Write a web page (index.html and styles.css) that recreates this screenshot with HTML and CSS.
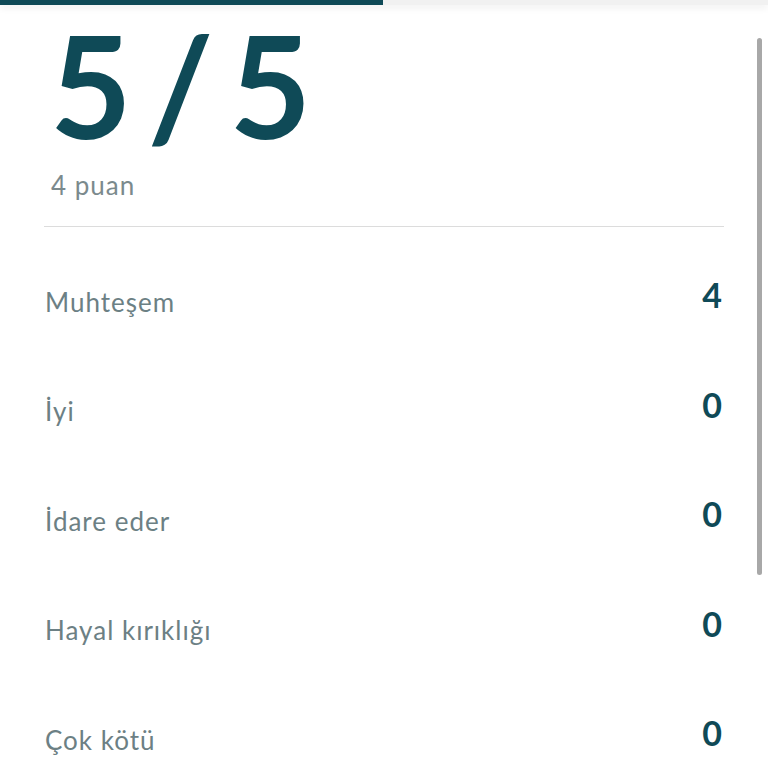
FILE: index.html
```
<!DOCTYPE html>
<html>
<head>
    <title>Değerlendirmeler</title>
    <link rel="stylesheet" href="styles.css">
</head>
<body>
    <div id="progress-bar"><div id="progress-fill"></div></div>
    <div id="panel">
        <div id="score-head">
            <div id="score">5/5</div>
            <div id="score-count">4 puan</div>
        </div>
        <div id="rating-list">
            <div class="rating-row">
                <span class="rating-label">Muhteşem</span>
                <span class="rating-value">4</span>
            </div>
            <div class="rating-row">
                <span class="rating-label">İyi</span>
                <span class="rating-value">0</span>
            </div>
            <div class="rating-row">
                <span class="rating-label">İdare eder</span>
                <span class="rating-value">0</span>
            </div>
            <div class="rating-row">
                <span class="rating-label">Hayal kırıklığı</span>
                <span class="rating-value">0</span>
            </div>
            <div class="rating-row">
                <span class="rating-label">Çok kötü</span>
                <span class="rating-value">0</span>
            </div>
        </div>
    </div>
    <div id="scroll-thumb"></div>
</body>
</html>
```

FILE: styles.css
```
body {
    font-family: Lato, "Open Sans", sans-serif;
    margin: 0;
    padding: 0;
    background-color: #ffffff;
    height: 100vh;
    overflow: hidden;
}
#progress-bar {
    position: fixed;
    top: 0;
    left: 0;
    right: 0;
    height: 5px;
    background-color: #f1f1f1;
    box-shadow: 0 3px 7px rgba(0,0,0,0.07);
    z-index: 1;
}
#progress-fill {
    width: 383px;
    height: 100%;
    background-color: #0f4a57;
}
#panel {
    padding: 0 44px;
}
#score-head {
    border-bottom: 1px solid #dcdcdc;
    padding-bottom: 25px;
}
#score {
    font-size: 141px;
    font-weight: 700;
    line-height: 1.2;
    letter-spacing: 16px;
    color: #0f4a57;
    padding-left: 6px;
}
#score-count {
    font-size: 26px;
    color: #7b8a8d;
    letter-spacing: 1px;
    padding-left: 7px;
}
#rating-list {
    padding-top: 20px;
}
.rating-row {
    height: 109.5px;
    display: flex;
    justify-content: space-between;
    align-items: center;
}
.rating-label {
    font-size: 26px;
    color: #6c8084;
    letter-spacing: 1px;
    padding-left: 1px;
}
.rating-value {
    font-size: 34px;
    font-weight: 700;
    color: #0f4a57;
    padding-bottom: 14px;
    padding-right: 2px;
}
#scroll-thumb {
    position: fixed;
    right: 6px;
    top: 38px;
    width: 5px;
    height: 537px;
    border-radius: 3px;
    background-color: #a8a8a8;
}
```
